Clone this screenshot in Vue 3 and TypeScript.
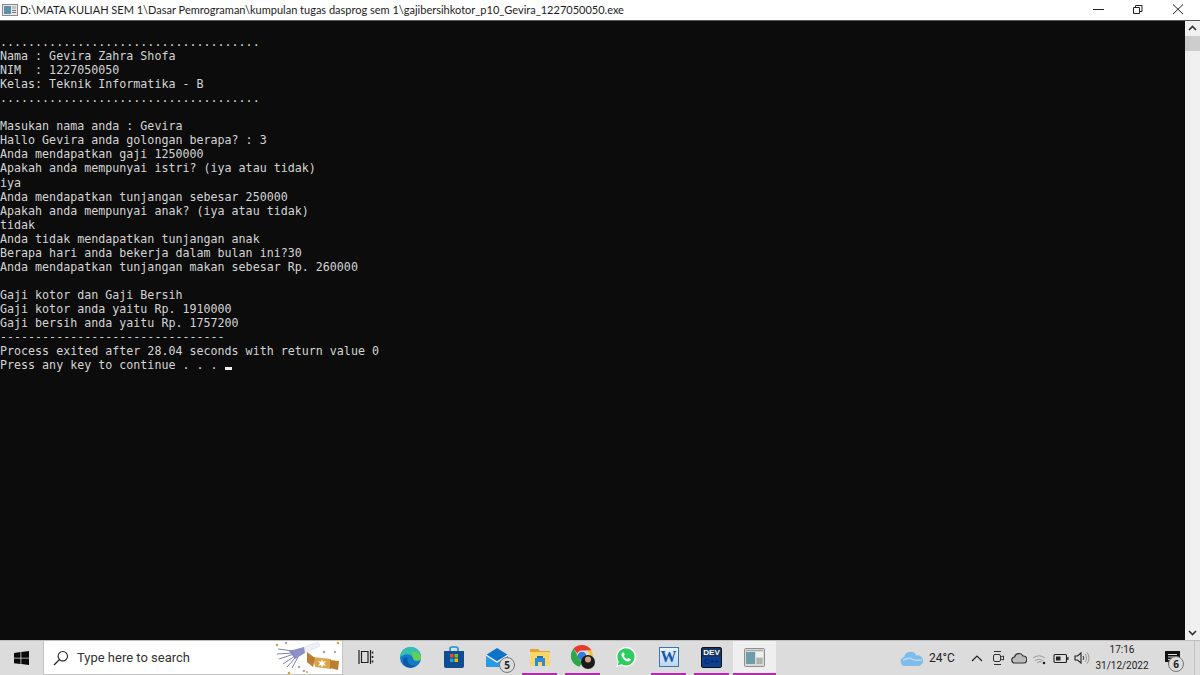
<script setup lang="ts">
const lines: string[] = [
  '',
  '.....................................',
  'Nama : Gevira Zahra Shofa',
  'NIM  : 1227050050',
  'Kelas: Teknik Informatika - B',
  '.....................................',
  '',
  'Masukan nama anda : Gevira',
  'Hallo Gevira anda golongan berapa? : 3',
  'Anda mendapatkan gaji 1250000',
  'Apakah anda mempunyai istri? (iya atau tidak)',
  'iya',
  'Anda mendapatkan tunjangan sebesar 250000',
  'Apakah anda mempunyai anak? (iya atau tidak)',
  'tidak',
  'Anda tidak mendapatkan tunjangan anak',
  'Berapa hari anda bekerja dalam bulan ini?30',
  'Anda mendapatkan tunjangan makan sebesar Rp. 260000',
  '',
  'Gaji kotor dan Gaji Bersih',
  'Gaji kotor anda yaitu Rp. 1910000',
  'Gaji bersih anda yaitu Rp. 1757200',
  '--------------------------------',
  'Process exited after 28.04 seconds with return value 0',
]
</script>

<template>
  <div class="screen">
    <header class="titlebar">
      <svg class="appicon" width="16" height="14" viewBox="0 0 16 14">
        <rect x="0.5" y="1.5" width="15" height="11" fill="#e8e8e8" stroke="#8a8a8a" />
        <rect x="2" y="3" width="7" height="8" fill="#5d8fa8" />
        <rect x="10" y="3" width="4" height="3" fill="#b8c8b8" />
        <rect x="10" y="7" width="4" height="1" fill="#777" />
        <rect x="10" y="9" width="4" height="1" fill="#777" />
      </svg>
      <span class="title">D:\MATA KULIAH SEM 1\Dasar Pemrograman\kumpulan tugas dasprog sem 1\gajibersihkotor_p10_Gevira_1227050050.exe</span>
      <div class="winbtns">
        <svg width="40" height="20" viewBox="0 0 40 20"><path d="M15 9.500h11" stroke="#222" fill="none" /></svg>
        <svg width="40" height="20" viewBox="0 0 40 20"><path d="M15.500 7.500h6v6h-6zM17.500 7.500v-2h6.500v6h-2.500" stroke="#222" fill="none" /></svg>
        <svg width="40" height="20" viewBox="0 0 40 20"><path d="M15 4.500l10 9.500M25 4.500L15 14" stroke="#222" fill="none" /></svg>
      </div>
    </header>

    <main class="body">
      <div class="console">
        <div v-for="(l, i) in lines" :key="i" class="line">{{ l }}</div>
        <div class="line">Press any key to continue . . . <span class="cursor"></span></div>
      </div>
      <aside class="scrollbar">
        <svg width="15" height="15" viewBox="0 0 15 15"><path d="M4 9l3.500-3.500L11 9" stroke="#333" stroke-width="1.600" fill="none" /></svg>
        <div class="thumb"></div>
        <div class="track"></div>
        <svg width="15" height="15" viewBox="0 0 15 15"><path d="M4 6l3.500 3.500L11 6" stroke="#333" stroke-width="1.600" fill="none" /></svg>
      </aside>
    </main>

    <footer class="taskbar">
      <div class="start">
        <svg width="15" height="14" viewBox="0 0 15 15" fill="#0a0a0a" preserveAspectRatio="none">
          <path d="M0 2.100l6.500-.9v6H0zM7.300 1.100L15 0v7.200H7.300zM0 8h6.500v6L0 13.100zM7.300 8H15v7l-7.700-1.100z" />
        </svg>
      </div>
      <div class="search">
        <svg class="glass" width="16" height="16" viewBox="0 0 16 16">
          <circle cx="9.800" cy="6.200" r="4.700" fill="none" stroke="#222" stroke-width="1.100" />
          <path d="M6.400 9.600L1 15" stroke="#222" stroke-width="1.300" />
        </svg>
        <span class="placeholder">Type here to search</span>
        <svg class="party" width="66" height="33" viewBox="0 0 66 33">
          <path d="M27 7L43 1l2 4-16 7z" fill="#eef0f4" stroke="#cfd3da" stroke-width=".5" />
          <path d="M14 10L29 6l1 6-10 6z" fill="#8d8fc6" />
          <path d="M18 10L3 8M18 12L2 13M19 13L4 18M20 15L8 23M21 16L12 26M23 16L17 27" stroke="#7f80b8" stroke-width="1" fill="none" />
          <path d="M38 16l18 2 0 10-16-2z" fill="#d8a54c" />
          <path d="M32 11l8 6-2 9-6-5zM55 19l9 1-1 9-8-2z" fill="#bb7d2e" />
          <path d="M47 18l1 3 3-1-2 2.500 2 2.500-3-1-1 3-1-3-3 1 2-2.500-2-2.500 3 1z" fill="#fff" />
          <circle cx="2" cy="4" r="1.300" fill="#dda02f" /><circle cx="11" cy="2" r="1.200" fill="#a8a8b8" />
          <circle cx="14" cy="32" r="1.300" fill="#dda02f" /><circle cx="24" cy="26" r="1.300" fill="#a8a8b8" />
          <circle cx="29" cy="30" r="1.300" fill="#a8a8b8" /><circle cx="32" cy="31" r="1" fill="#dda02f" />
          <circle cx="49" cy="11" r="1.300" fill="#a8a8b8" /><circle cx="60" cy="11" r="1.200" fill="#a8a8b8" /><circle cx="63" cy="2" r="1.300" fill="#dda02f" />
        </svg>
      </div>

      <div class="apps">
        <div class="app taskview">
          <svg width="16" height="16" viewBox="0 0 16 16" fill="none" stroke="#222">
            <path d="M3.500 2.500h6.500v11H3.500zM1 1v14M12.500 1v14" stroke-width="1.200" />
            <path d="M14.500 2.500v2M14.500 7v2M14.500 11.500v2" stroke-width="1.600" />
          </svg>
        </div>
        <div class="app">
          <svg width="23" height="23" viewBox="0 0 24 24">
            <circle cx="12" cy="12" r="11" fill="#1479c9" />
            <path d="M1 12C2 4 8 1 12 1c6 0 11 4 11 10 0 3-3 5-6 4-3 0-2-3-3-4-2-3-8-4-13 1z" fill="#35c1b0" />
            <path d="M14 6c5 0 9 3 9 6 0 3-3 4-6 3-2 0-2-2-3-4z" fill="#62d24e" />
            <path d="M9 13c-1 5 4 9 9 7-3 3-8 3-11 1-3-2-4-6-1-9 1 0 3 0 3 1z" fill="#0b57a8" />
          </svg>
        </div>
        <div class="app">
          <svg width="20" height="22" viewBox="0 0 20 22">
            <path d="M6 6V3a2 2 0 0 1 2-2h4a2 2 0 0 1 2 2v3" fill="none" stroke="#1e8fd0" stroke-width="1.600" />
            <path d="M0 5h20v15a2 2 0 0 1-2 2H2a2 2 0 0 1-2-2z" fill="#0f4d91" />
            <rect x="6" y="8" width="3.500" height="3.500" fill="#e74c2b" />
            <rect x="10.500" y="8" width="3.500" height="3.500" fill="#7eb82f" />
            <rect x="6" y="12.500" width="3.500" height="3.500" fill="#1f9be0" />
            <rect x="10.500" y="12.500" width="3.500" height="3.500" fill="#f5b50f" />
          </svg>
        </div>
        <div class="app">
          <svg width="22" height="19" viewBox="0 0 22 19">
            <path d="M0 7L11 0l11 7v12H0z" fill="#0f74c8" />
            <path d="M0 7l11 7 11-7v12H0z" fill="#2a9ae6" />
            <path d="M0 7l11 7 11-7" fill="none" stroke="#fff" stroke-width="1.200" />
          </svg>
          <span class="badge mail">5</span>
        </div>
        <div class="app running">
          <svg width="20" height="17" viewBox="0 0 20 17">
            <path d="M0 0h8l2 2h10v4H0z" fill="#e0a52e" />
            <rect x="0" y="3" width="20" height="14" fill="#f9d66c" />
            <path d="M5 9h10v8h-3v-4H8v4H5z" fill="#2a8cd6" />
            <rect x="7" y="7" width="6" height="2" fill="#1e6fb4" />
          </svg>
        </div>
        <div class="app running">
          <svg width="24" height="24" viewBox="0 0 24 24">
            <path d="M11 0a11 11 0 0 1 9.500 5.500H11a5 5 0 0 0-4.600 3L2.600 3.600A11 11 0 0 1 11 0z" fill="#e6392f" />
            <path d="M2.600 3.600l4.800 8.300a5 5 0 0 0 4.700 4L8.500 21.700A11 11 0 0 1 2.600 3.600z" fill="#2ea84a" />
            <path d="M20.500 5.500A11 11 0 0 1 11 22l4-7a5 5 0 0 0 .2-9.500z" fill="#f9c22c" />
            <circle cx="11" cy="11" r="4.200" fill="#2f7de1" />
            <circle cx="17" cy="17" r="7" fill="#1d1a1a" />
            <circle cx="17" cy="14.500" r="3" fill="#c9a58c" />
          </svg>
        </div>
        <div class="app">
          <svg width="22" height="22" viewBox="0 0 22 22">
            <path d="M1 21l1.500-5.300A10 10 0 1 1 6.300 19.500z" fill="#fff" />
            <path d="M2.700 19.300l1-3.800A8.600 8.600 0 1 1 6.600 18.300z" fill="#2ecb5f" />
            <path d="M8 6.200c-.6 0-1.500 1-1.500 2.500 0 3 3.800 6.800 6.800 6.800 1.500 0 2.500-1 2.500-1.900 0-.5-2-1.600-2.500-1.500-.4.100-.8 1-1.200 1-1 0-3.200-2.300-3.200-3.100 0-.5.800-.8.900-1.200 0-.5-1-2.600-1.800-2.600z" fill="#fff" />
          </svg>
        </div>
        <div class="app running">
          <div class="word"><span>W</span></div>
        </div>
        <div class="app running">
          <div class="dev"><span>DEV</span><span class="cpp">C++</span></div>
        </div>
        <div class="app running active">
          <svg width="21" height="19" viewBox="0 0 21 19">
            <rect x="0.500" y="0.500" width="20" height="18" rx="1" fill="#d8d8d8" stroke="#8f8f8f" />
            <rect x="2" y="4" width="9" height="12" fill="#6c9da8" />
            <rect x="12" y="4" width="7" height="5" fill="#eef2ea" />
            <path d="M12.500 11h6M12.500 13h6M12.500 15h6" stroke="#7c8f7c" />
            <rect x="2" y="2" width="17" height="1" fill="#a8a8a8" />
          </svg>
        </div>
      </div>

      <div class="weather">
        <svg width="24" height="15" viewBox="0 0 24 15">
          <path d="M5 15a4.500 4.500 0 0 1-.8-8.900A6.500 6.500 0 0 1 16.500 4.500 5.300 5.300 0 0 1 19 15z" fill="#7fbcea" />
          <path d="M3 9c3-1 7-3 9-1s5 1 10 1" fill="none" stroke="#b5daf5" stroke-width="1.500" />
        </svg>
        <span>24°C</span>
      </div>

      <div class="tray">
        <svg width="14" height="14" viewBox="0 0 14 14"><path d="M2 10l5-5 5 5" fill="none" stroke="#222" stroke-width="1.200" /></svg>
        <svg width="14" height="16" viewBox="0 0 14 16" fill="none" stroke="#333">
          <path d="M3 1.500h7M3 14.500h7" stroke-width="1.100" />
          <rect x="2.500" y="4.500" width="7" height="7" rx="1.500" />
          <path d="M9.500 7l3-1v4l-3-1" />
        </svg>
        <svg width="16" height="12" viewBox="0 0 16 12"><path d="M4 11a3 3 0 0 1-.4-6A4.500 4.500 0 0 1 12 4a3.500 3.500 0 0 1 .5 7z" fill="#bbb" stroke="#333" stroke-width="1.200" /></svg>
        <svg width="16" height="14" viewBox="0 0 16 14" fill="none" stroke="#9a9a9a">
          <path d="M1 7a10 10 0 0 1 12 0M3 9.500a7 7 0 0 1 8 0M5 12a4 4 0 0 1 4.500-1" />
          <circle cx="12" cy="12" r="1.300" fill="#222" stroke="none" />
        </svg>
        <svg width="16" height="11" viewBox="0 0 16 11">
          <rect x="1" y="1.500" width="12.500" height="8" rx="1" fill="none" stroke="#222" stroke-width="1.100" />
          <rect x="3" y="3.500" width="4.500" height="4" fill="#222" />
          <rect x="14.200" y="4" width="1.300" height="3" fill="#222" />
        </svg>
        <svg width="16" height="14" viewBox="0 0 16 14" fill="none">
          <path d="M1 5v4h2.500L7 12V2L3.500 5z" stroke="#222" stroke-width="1.100" />
          <path d="M9 5a3 3 0 0 1 0 4" stroke="#333" />
          <path d="M11 3a6 6 0 0 1 0 8M13 1.500a8.500 8.500 0 0 1 0 11" stroke="#999" />
        </svg>
      </div>

      <div class="clock">
        <span>17:16</span>
        <span>31/12/2022</span>
      </div>

      <div class="notify">
        <svg width="15" height="15" viewBox="0 0 15 15">
          <path d="M0 0h15v11H6l-3 3.500V11H0z" fill="#111" />
          <path d="M3 3.500h9M3 6h9M3 8.500h6" stroke="#ddd" />
        </svg>
        <span class="badge note">6</span>
      </div>
      <div class="edge"></div>
    </footer>
  </div>
</template>

<style>
html, body { margin: 0; padding: 0; overflow: hidden; }
</style>

<style scoped>
.screen {
  width: 1200px;
  height: 675px;
  display: flex;
  flex-direction: column;
  overflow: hidden;
  background: #fff;
}
.titlebar {
  height: 20px;
  flex: none;
  display: flex;
  align-items: center;
  background: #fff;
  padding-left: 2px;
}
.appicon { margin-right: 2px; flex: none; }
.title {
  font: 11px/20px "Lato", sans-serif;
  color: #1c1c1c;
  white-space: nowrap;
}
.winbtns { margin-left: auto; display: flex; margin-right: 2px; }
.body {
  flex: 1;
  min-height: 0;
  display: flex;
  background: #0c0c0c;
  border-top: 1px solid #555;
}
.console {
  flex: 1;
  color: #d4d4d4;
  font: 11.670px/14.060px "DejaVu Sans Mono", monospace;
  white-space: pre;
}
.line { height: 14.060px; }
.cursor {
  display: inline-block;
  width: 7px;
  height: 3px;
  background: #eee;
  vertical-align: -1px;
}
.scrollbar {
  width: 15px;
  flex: none;
  display: flex;
  flex-direction: column;
  background: #f0f0f0;
}
.thumb { height: 15px; background: #cdcdcd; }
.track { flex: 1; }
.taskbar {
  height: 35px;
  flex: none;
  display: flex;
  align-items: stretch;
  background: #dcdcdc;
  border-top: 1px solid #bdbdbd;
  box-sizing: border-box;
  color: #222;
}
.taskbar > * { flex: none; }
.start { width: 43px; display: flex; align-items: center; justify-content: center; padding-right: 1px; box-sizing: border-box; }
.search {
  width: 300px;
  display: flex;
  align-items: center;
  background: #fff;
  border: 1px solid #c4c4c4;
  border-top: 0;
  box-sizing: border-box;
  padding-left: 9px;
}
.glass { margin-right: 8px; flex: none; }
.placeholder { font: 13px "Roboto", sans-serif; color: #333; white-space: nowrap; }
.party { margin-left: auto; margin-right: 1px; flex: none; }
.apps { display: flex; margin-left: 3px; }
.app {
  width: 43px;
  position: relative;
  display: flex;
  align-items: center;
  justify-content: center;
  padding-bottom: 2px;
  box-sizing: border-box;
}
.taskview { padding-right: 3px; }
.running::after {
  content: "";
  position: absolute;
  left: 4px;
  right: 4px;
  bottom: 0;
  height: 2.500px;
  background: #b829b0;
}
.active { background: #efefef; }
.active::after { left: 0; right: 0; }
.badge {
  position: absolute;
  width: 14px;
  height: 14px;
  border-radius: 50%;
  background: #dcdcdc;
  border: 1.500px solid #777;
  font: bold 10px/14px "Open Sans", sans-serif;
  color: #222;
  text-align: center;
}
.mail { right: 3px; bottom: 2px; }
.note { right: 2px; bottom: 3px; }
.word {
  width: 20px;
  height: 20px;
  background: linear-gradient(#e8f2fb, #bcd7f0);
  border: 1px solid #3a73b5;
  box-sizing: border-box;
  display: flex;
  align-items: center;
  justify-content: center;
}
.word span {
  font: bold 16px/18px "Liberation Serif", serif;
  color: #1857a8;
}
.dev {
  width: 21px;
  height: 21px;
  background: linear-gradient(#1a3560 45%, #0d3f93 45%);
  border: 1px solid #111;
  border-radius: 2px;
  box-sizing: border-box;
  display: flex;
  flex-direction: column;
  align-items: center;
  font: bold 8px/9px "Liberation Sans", sans-serif;
  color: #fff;
}
.cpp { color: #062a75; }
.weather {
  margin-left: 124px;
  width: 56px;
  display: flex;
  align-items: center;
  gap: 5px;
  font: 12px "Roboto", sans-serif;
  color: #222;
}
.tray {
  margin-left: 10px;
  display: grid;
  grid-template-columns: repeat(6, 21px);
  align-items: center;
  justify-items: center;
}
.clock {
  width: 54px;
  margin-left: 3px;
  display: flex;
  flex-direction: column;
  align-items: center;
  justify-content: center;
  font: 10px/16px "Roboto", sans-serif;
  color: #222;
  white-space: nowrap;
}
.notify {
  width: 28px;
  margin-left: 9px;
  position: relative;
  display: flex;
  align-items: center;
  justify-content: center;
}
.edge { width: 1px; margin-left: 8px; background: #c4c4c4; }
</style>
